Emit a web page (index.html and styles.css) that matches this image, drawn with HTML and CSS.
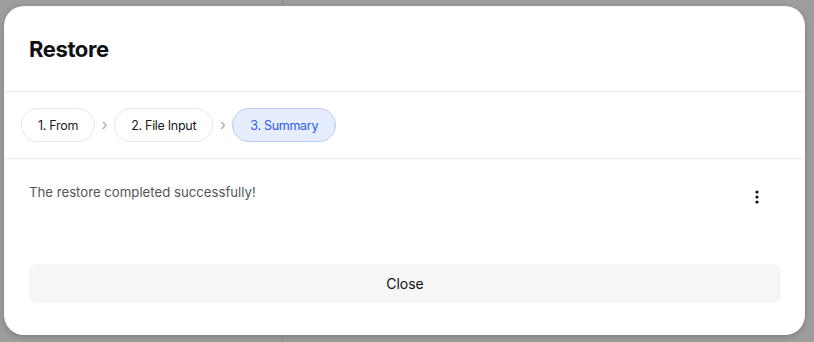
FILE: index.html
```html
<!doctype html>
<html>
	<head>
		<title>Restore</title>
		<link rel="stylesheet" href="styles.css">
	</head>
	<body>
		<div class="backdrop">
			<div class="modal">
				<div class="modal-head">
					<h2>Restore</h2>
				</div>

				<div class="steps">
					<span class="step">1. From</span>
					<span class="sep">&rsaquo;</span>
					<span class="step">2. File Input</span>
					<span class="sep">&rsaquo;</span>
					<span class="step active">3. Summary</span>
				</div>

				<div class="modal-body">
					<div class="summary">
						<p>The restore completed successfully!</p>
						<button class="more" aria-label="More">
							<svg width="4" height="14" viewBox="0 0 4 14"><circle cx="2" cy="2" r="1.6"/><circle cx="2" cy="7" r="1.6"/><circle cx="2" cy="12" r="1.6"/></svg>
						</button>
					</div>
					<button class="close">Close</button>
				</div>
			</div>
		</div>
	</body>
</html>
```

FILE: styles.css
```css
html, body {
	margin: 0;
	padding: 0;
	font-family: Inter, "Liberation Sans", sans-serif;
	background-color: #9d9d9d;
}

.backdrop {
	height: 342px;
	padding: 6px 9px 0 4px;
	box-sizing: border-box;
	background: linear-gradient(to right, transparent 282px, #8f8f8f 282px, #8f8f8f 283px, transparent 283px);
}

.modal {
	width: 801px;
	height: 329px;
	background-color: #fff;
	border-radius: 20px;
	display: flex;
	flex-direction: column;
	box-shadow: 0 2px 6px rgba(0, 0, 0, 0.2);
}

.modal-head {
	height: 85px;
	padding: 0 25px;
	display: flex;
	align-items: center;
	border-bottom: 1px solid #ebebeb;
}

.modal-head h2 {
	margin: 0;
	font-size: 22px;
	font-weight: 700;
	color: #111;
	letter-spacing: -0.4px;
}

.steps {
	height: 66px;
	padding: 0 17px;
	display: flex;
	align-items: center;
	gap: 4.5px;
	border-bottom: 1px solid #ebebeb;
}

.step {
	height: 32px;
	padding: 0 16px;
	display: flex;
	align-items: center;
	border: 1px solid #e6e6e6;
	border-radius: 17px;
	font-size: 12.5px;
	letter-spacing: -0.3px;
	color: #1a1a1a;
}

.step.active {
	padding: 0 17px;
	background-color: #e6edff;
	border-color: #b8ccfb;
	color: #2a5cf2;
}

.sep {
	color: #aaa;
	font-size: 16px;
	padding: 0 2px 2px;
}

.modal-body {
	flex: 1;
	padding: 0 24px 32px 25px;
	display: flex;
	flex-direction: column;
}

.summary {
	flex: 1;
	display: flex;
	align-items: flex-start;
	justify-content: space-between;
	padding-top: 25px;
}

.summary p {
	margin: 0;
	font-size: 13.2px;
	color: #555;
}

.more {
	border: 0 none;
	background: none;
	padding: 0;
	margin: 6px 22px 0 0;
	cursor: pointer;
	fill: #111;
}

.close {
	height: 39px;
	border: 0 none;
	border-radius: 8px;
	background-color: #f6f6f6;
	font-family: inherit;
	font-size: 14px;
	color: #111;
	cursor: pointer;
}
```
